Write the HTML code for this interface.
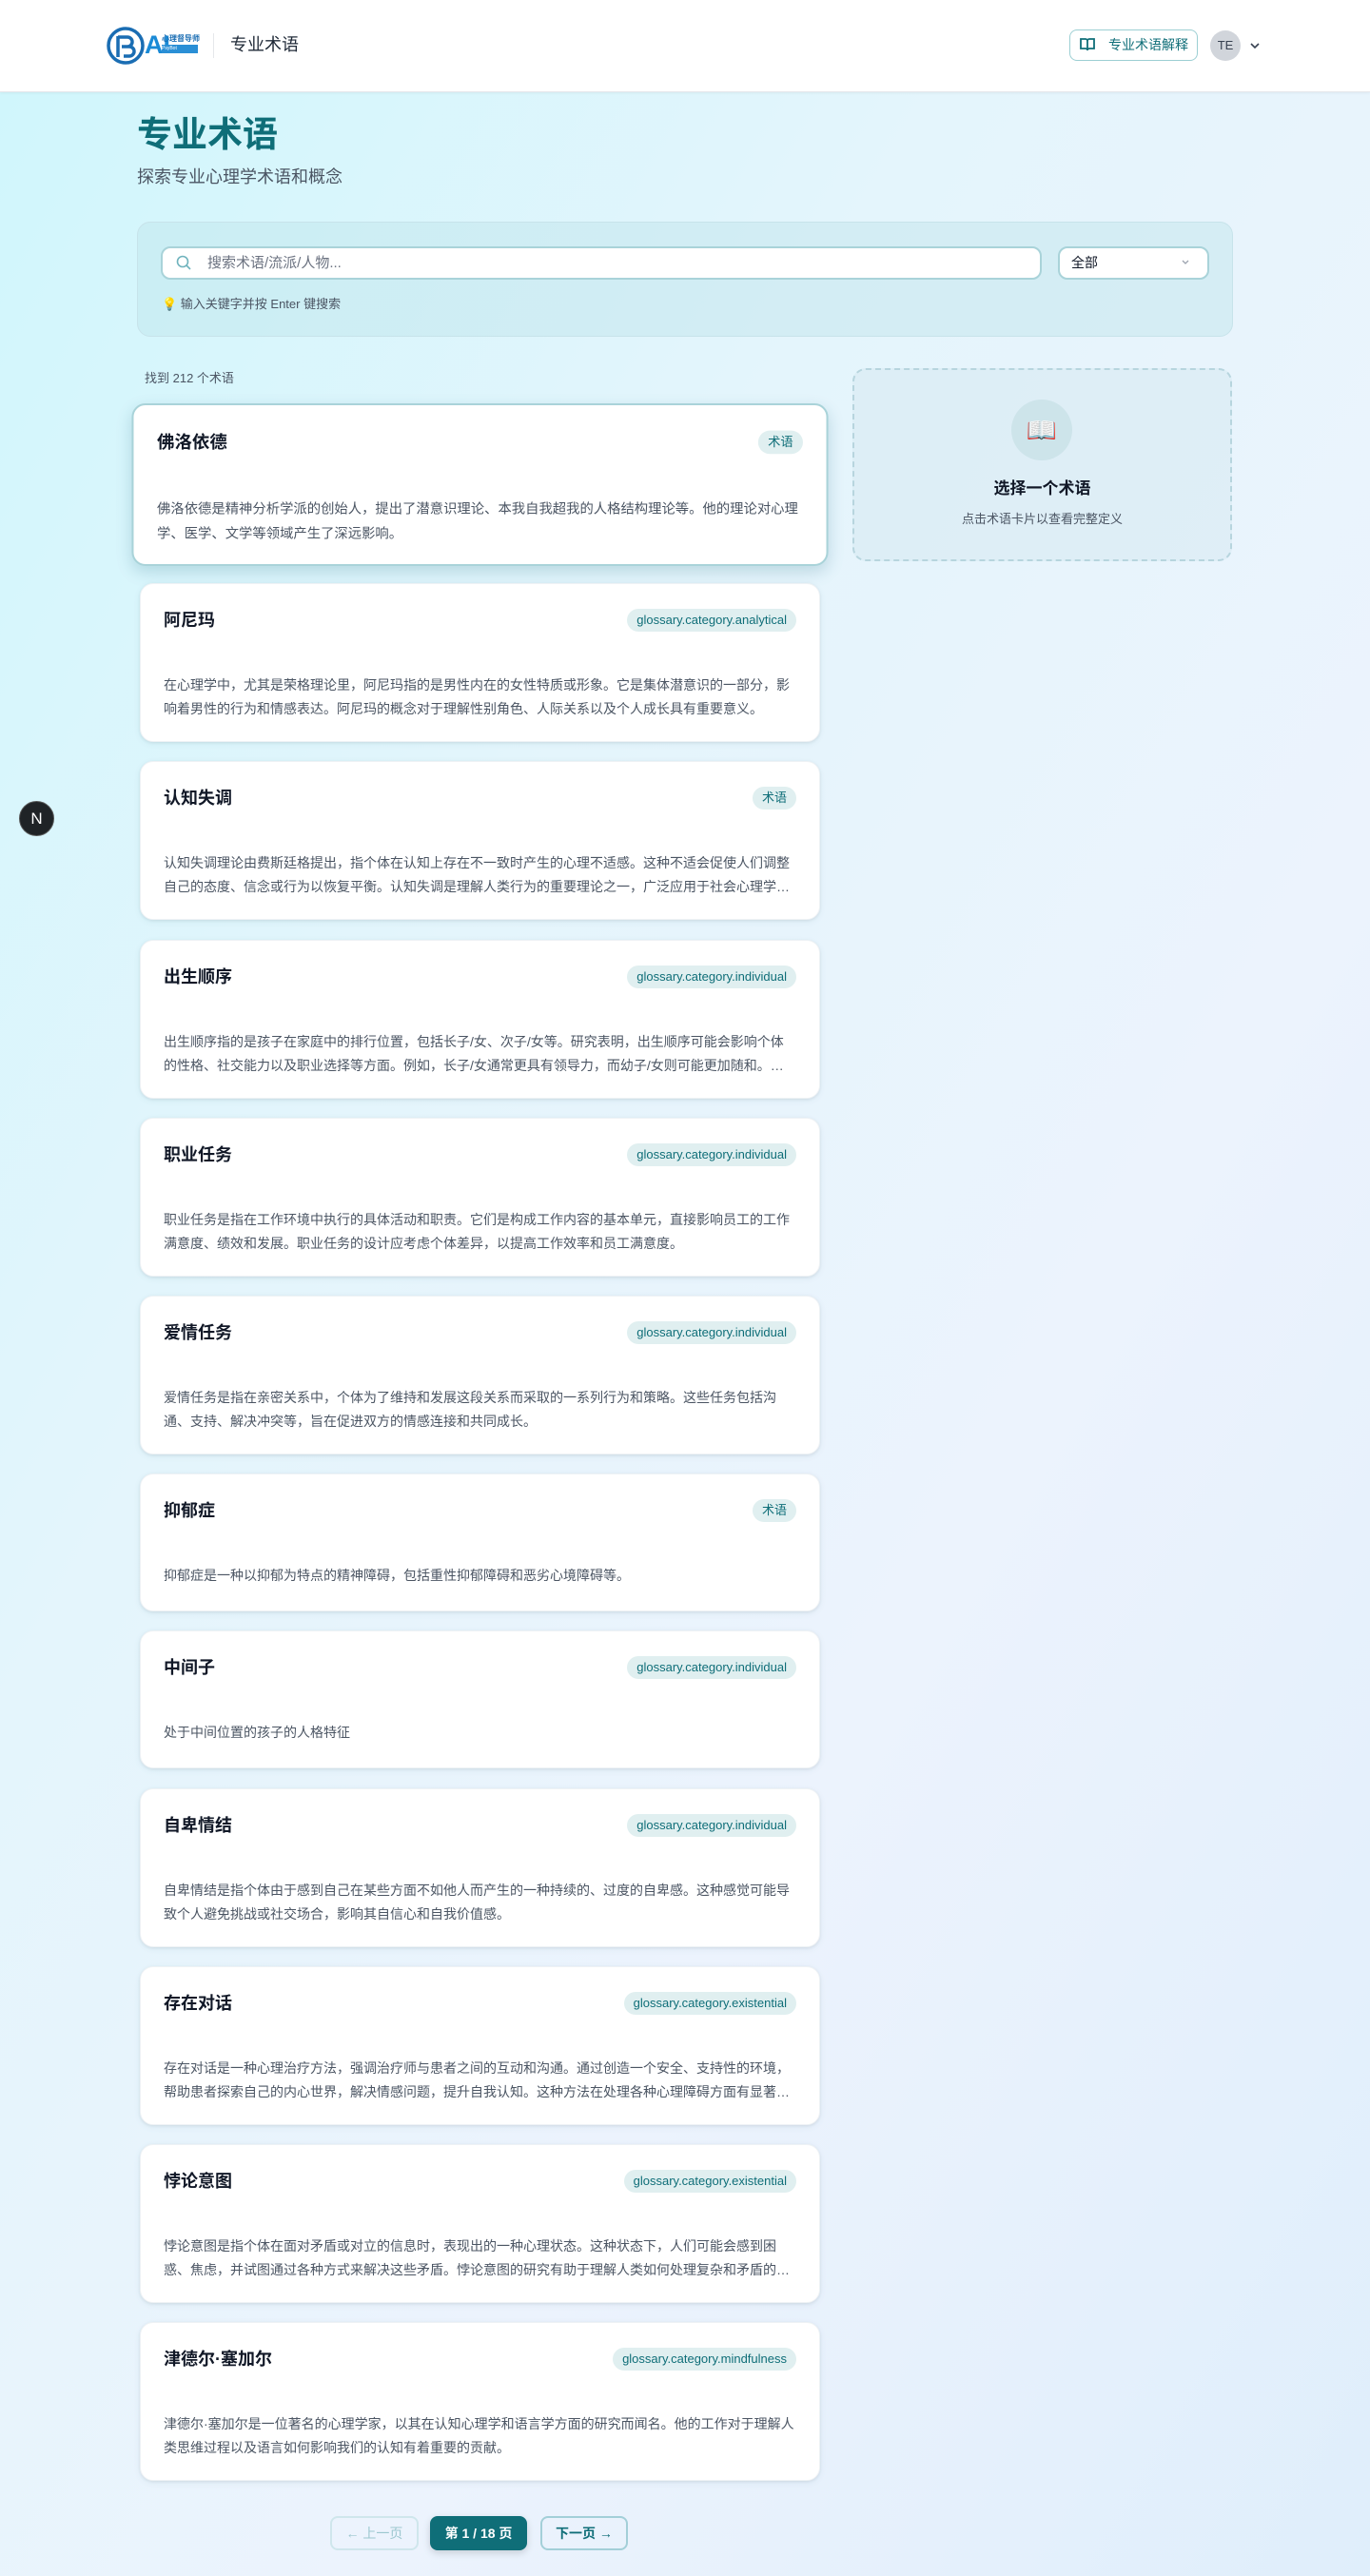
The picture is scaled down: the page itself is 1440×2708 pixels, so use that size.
<!DOCTYPE html>
<html><head><meta charset="utf-8"><style>
*{box-sizing:border-box;margin:0;padding:0}
body{width:1440px;height:2708px;overflow:hidden;font-family:"Liberation Sans","Noto Sans CJK SC",sans-serif;background:linear-gradient(120deg,#cff6fc 0%,#e4f5fc 35%,#ecf3fd 65%,#dfeefb 100%);position:relative;color:#111827}
header{position:absolute;left:0;top:0;width:1440px;height:97px;background:#fff;border-bottom:1px solid #e5e7eb;box-shadow:0 1px 3px rgba(0,0,0,.05)}
.abs{position:absolute}
.card{position:absolute;left:147px;width:715px;background:#fff;border-radius:14px;box-shadow:0 1px 3px rgba(0,0,0,.08),0 2px 8px rgba(0,80,100,.06);padding:24px;border:1px solid #eef2f5}
.card h3{font-size:18px;font-weight:700;line-height:28px;color:#111827}
.tag{position:absolute;right:24px;top:26px;height:24px;line-height:24px;padding:0 10px;border-radius:12px;background:#e0eff0;color:#0f6e78;font-size:13px}
.card p{margin-top:42px;font-size:14px;line-height:25px;color:#4b5563;display:-webkit-box;-webkit-line-clamp:2;-webkit-box-orient:vertical;overflow:hidden}
.btn{position:absolute;top:2645px;height:36px;border-radius:8px;font-size:14px;line-height:32px;text-align:center}
</style></head><body>
<header>
  <svg class="abs" style="left:112px;top:28px" width="40" height="40" viewBox="0 0 40 40"><circle cx="20" cy="20" r="18" fill="none" stroke="#1a6db3" stroke-width="3.5"/><path d="M12 10v22M12 11h10a5 5 0 0 1 0 10h-6M18 21h6a5 5 0 0 1 0 10h-6" fill="none" stroke="#1a6db3" stroke-width="3.5"/></svg>
  <div class="abs" style="left:152px;top:30px;font-size:27px;font-weight:700;color:#1a8ad6;line-height:34px">AI</div>
  <div class="abs" style="left:170px;top:36px;font-size:8px;color:#1a6db3;line-height:9px;font-weight:700">心理督导师</div>
  <div class="abs" style="left:170px;top:47px;width:38px;height:9px;background:#2a8fd6;color:#fff;font-size:5px;line-height:9px">PsyBot Supervisor</div>
  <div class="abs" style="left:224px;top:35px;width:1px;height:26px;background:#e5e7eb"></div>
  <div class="abs" style="left:242px;top:34px;font-size:18px;line-height:26px;color:#1f2937">专业术语</div>
  <div class="abs" style="left:1124px;top:31px;width:135px;height:33px;border:1px solid #9ccfd3;border-radius:8px;color:#0f6e78;font-size:14px;line-height:31px;padding-left:40px">专业术语解释</div>
  <svg class="abs" style="left:1134px;top:39px" width="18" height="16" viewBox="0 0 18 16"><path d="M2 2h5a2 2 0 0 1 2 2v10a2 2 0 0 0-2-2H2zM16 2h-5a2 2 0 0 0-2 2v10a2 2 0 0 1 2-2h5z" fill="none" stroke="#0f6e78" stroke-width="1.8"/></svg>
  <div class="abs" style="left:1272px;top:32px;width:32px;height:32px;border-radius:50%;background:#d1d5db;color:#374151;font-size:13px;line-height:32px;text-align:center">TE</div>
  <svg class="abs" style="left:1313px;top:42px" width="12" height="12" viewBox="0 0 12 12"><path d="M2 4l4 4 4-4" fill="none" stroke="#374151" stroke-width="1.6"/></svg>
</header>
<div class="abs" style="left:144px;top:118px;font-size:37px;font-weight:700;color:#0f6e78;line-height:48px">专业术语</div>
<div class="abs" style="left:144px;top:173px;font-size:18px;color:#4b5563;line-height:26px">探索专业心理学术语和概念</div>
<div class="abs" style="left:144px;top:233px;width:1152px;height:121px;border-radius:14px;background:rgba(190,228,236,.45);border:1px solid #c7e3ea"></div>
<div class="abs" style="left:169px;top:259px;width:926px;height:35px;border-radius:10px;background:#fff;border:2px solid #a9d3d9"></div>
<svg class="abs" style="left:184px;top:267px" width="18" height="18" viewBox="0 0 18 18"><circle cx="8" cy="8" r="5.5" fill="none" stroke="#6fb3bd" stroke-width="1.6"/><path d="M12 12l4 4" stroke="#6fb3bd" stroke-width="1.6"/></svg>
<div class="abs" style="left:218px;top:266px;font-size:15px;color:#6b7280;line-height:22px">搜索术语/流派/人物...</div>
<div class="abs" style="left:1112px;top:259px;width:159px;height:35px;border-radius:10px;background:#fff;border:2px solid #a9d3d9;font-size:14px;line-height:31px;padding-left:12px;color:#111827">全部</div>
<svg class="abs" style="left:1241px;top:271px" width="10" height="10" viewBox="0 0 10 10"><path d="M2 3l3 3 3-3" fill="none" stroke="#9ca3af" stroke-width="1.3"/></svg>
<div class="abs" style="left:170px;top:310px;font-size:13px;color:#4b5563;line-height:20px">💡 输入关键字并按 Enter 键搜索</div>
<div class="abs" style="left:152px;top:388px;font-size:13px;color:#4b5563;line-height:20px">找到 212 个术语</div>

<div class="abs" style="left:896px;top:387px;width:399px;height:203px;border:2px dashed #b7d5de;border-radius:14px;background:rgba(210,230,240,.45)"></div>
<div class="abs" style="left:1063px;top:420px;width:64px;height:64px;border-radius:50%;background:#cde4ea;text-align:center;line-height:64px;font-size:26px">📖</div>
<div class="abs" style="left:896px;top:502px;width:399px;text-align:center;font-size:17px;font-weight:700;line-height:24px">选择一个术语</div>
<div class="abs" style="left:896px;top:536px;width:399px;text-align:center;font-size:13px;color:#4b5563;line-height:20px">点击术语卡片以查看完整定义</div>

<div class="card" style="top:426px;height:167px;transform:scale(1.024);border:2px solid #a9d3d9;box-shadow:0 6px 16px rgba(0,90,110,.18)"><h3>佛洛依德</h3><span class="tag">术语</span><p>佛洛依德是精神分析学派的创始人，提出了潜意识理论、本我自我超我的人格结构理论等。他的理论对心理学、医学、文学等领域产生了深远影响。</p></div>
<div class="card" style="top:613px;height:167px"><h3>阿尼玛</h3><span class="tag">glossary.category.analytical</span><p>在心理学中，尤其是荣格理论里，阿尼玛指的是男性内在的女性特质或形象。它是集体潜意识的一部分，影响着男性的行为和情感表达。阿尼玛的概念对于理解性别角色、人际关系以及个人成长具有重要意义。</p></div>
<div class="card" style="top:800px;height:167px"><h3>认知失调</h3><span class="tag">术语</span><p>认知失调理论由费斯廷格提出，指个体在认知上存在不一致时产生的心理不适感。这种不适会促使人们调整自己的态度、信念或行为以恢复平衡。认知失调是理解人类行为的重要理论之一，广泛应用于社会心理学领域。</p></div>
<div class="card" style="top:988px;height:167px"><h3>出生顺序</h3><span class="tag">glossary.category.individual</span><p>出生顺序指的是孩子在家庭中的排行位置，包括长子/女、次子/女等。研究表明，出生顺序可能会影响个体的性格、社交能力以及职业选择等方面。例如，长子/女通常更具有领导力，而幼子/女则可能更加随和。这些影响因人而异。</p></div>
<div class="card" style="top:1175px;height:167px"><h3>职业任务</h3><span class="tag">glossary.category.individual</span><p>职业任务是指在工作环境中执行的具体活动和职责。它们是构成工作内容的基本单元，直接影响员工的工作满意度、绩效和发展。职业任务的设计应考虑个体差异，以提高工作效率和员工满意度。</p></div>
<div class="card" style="top:1362px;height:167px"><h3>爱情任务</h3><span class="tag">glossary.category.individual</span><p>爱情任务是指在亲密关系中，个体为了维持和发展这段关系而采取的一系列行为和策略。这些任务包括沟通、支持、解决冲突等，旨在促进双方的情感连接和共同成长。</p></div>
<div class="card" style="top:1549px;height:145px"><h3>抑郁症</h3><span class="tag">术语</span><p>抑郁症是一种以抑郁为特点的精神障碍，包括重性抑郁障碍和恶劣心境障碍等。</p></div>
<div class="card" style="top:1714px;height:145px"><h3>中间子</h3><span class="tag">glossary.category.individual</span><p>处于中间位置的孩子的人格特征</p></div>
<div class="card" style="top:1880px;height:167px"><h3>自卑情结</h3><span class="tag">glossary.category.individual</span><p>自卑情结是指个体由于感到自己在某些方面不如他人而产生的一种持续的、过度的自卑感。这种感觉可能导致个人避免挑战或社交场合，影响其自信心和自我价值感。</p></div>
<div class="card" style="top:2067px;height:167px"><h3>存在对话</h3><span class="tag">glossary.category.existential</span><p>存在对话是一种心理治疗方法，强调治疗师与患者之间的互动和沟通。通过创造一个安全、支持性的环境，帮助患者探索自己的内心世界，解决情感问题，提升自我认知。这种方法在处理各种心理障碍方面有显著效果。</p></div>
<div class="card" style="top:2254px;height:167px"><h3>悖论意图</h3><span class="tag">glossary.category.existential</span><p>悖论意图是指个体在面对矛盾或对立的信息时，表现出的一种心理状态。这种状态下，人们可能会感到困惑、焦虑，并试图通过各种方式来解决这些矛盾。悖论意图的研究有助于理解人类如何处理复杂和矛盾的信息。</p></div>
<div class="card" style="top:2441px;height:167px"><h3>津德尔·塞加尔</h3><span class="tag">glossary.category.mindfulness</span><p>津德尔·塞加尔是一位著名的心理学家，以其在认知心理学和语言学方面的研究而闻名。他的工作对于理解人类思维过程以及语言如何影响我们的认知有着重要的贡献。</p></div>

<div class="btn" style="left:347px;width:93px;border:2px solid #cfe6ec;color:#9cc7cf">← 上一页</div>
<div class="btn" style="left:452px;width:102px;background:#0f6e78;color:#fff;font-weight:700;line-height:36px;box-shadow:0 3px 8px rgba(0,0,0,.15)">第 1 / 18 页</div>
<div class="btn" style="left:568px;width:92px;border:2px solid #a3cfd8;color:#0f6e78;font-weight:700">下一页 →</div>

<div class="abs" style="left:20px;top:842px;width:37px;height:37px;border-radius:50%;background:#1f2326;border:1px solid #555;color:#fff;text-align:center;line-height:35px;font-size:17px">N</div>
</body></html>
